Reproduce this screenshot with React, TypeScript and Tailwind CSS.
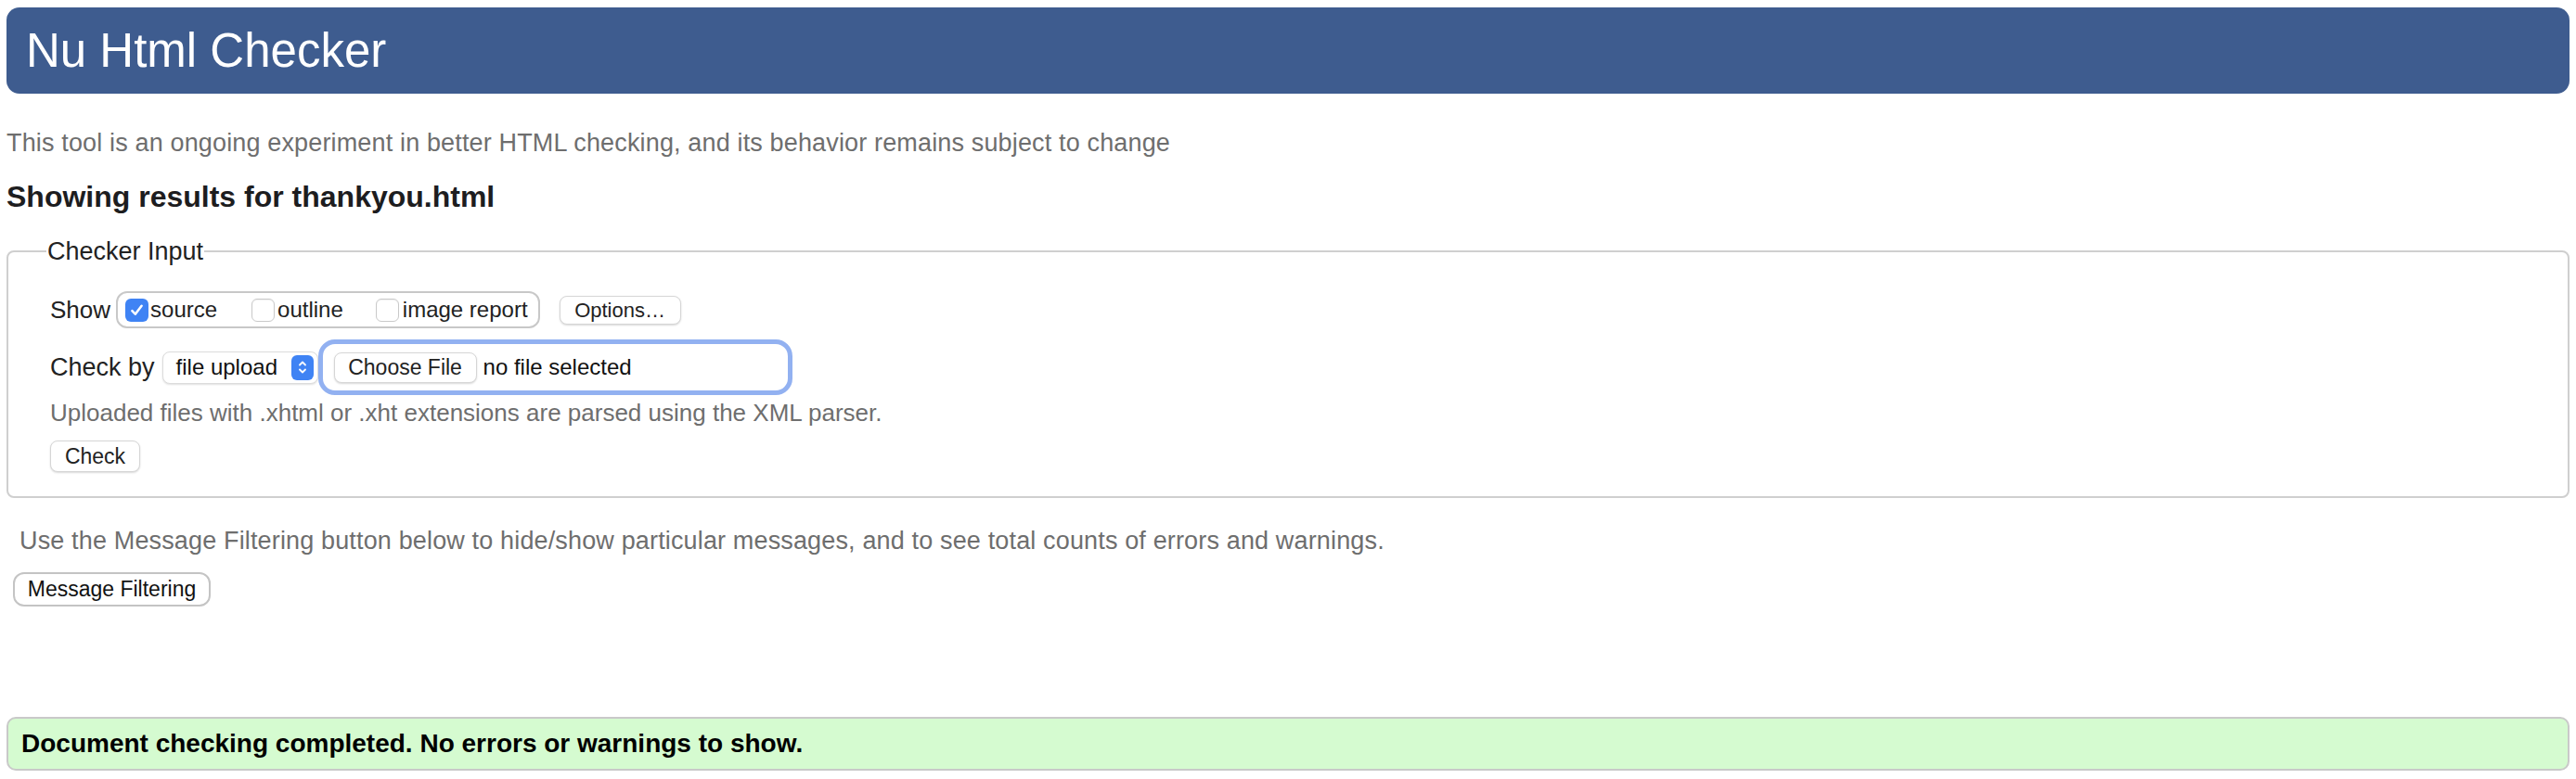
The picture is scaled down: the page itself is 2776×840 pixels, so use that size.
import React from "react";

function Checkbox({ checked }: { checked?: boolean }) {
  if (checked) {
    return (
      <span className="flex h-[25px] w-[25px] items-center justify-center rounded-[6px] bg-[#3f83f4]">
        <svg width="17" height="17" viewBox="0 0 16 16" fill="none">
          <path d="M3.2 8.6 L6.4 12 L12.8 3.6" stroke="white" strokeWidth="2.4" strokeLinecap="round" strokeLinejoin="round" />
        </svg>
      </span>
    );
  }
  return <span className="block h-[25px] w-[25px] rounded-[6px] border border-[#c9c9c9] bg-white shadow-[inset_0_1px_1px_rgba(0,0,0,0.06)]" />;
}

function Stepper() {
  return (
    <span className="flex h-[27px] w-[24px] items-center justify-center rounded-[6px] bg-[#3f83f4]">
      <svg width="14" height="20" viewBox="0 0 14 20" fill="none">
        <path d="M4 7.5 L7 4.5 L10 7.5" stroke="white" strokeWidth="1.8" strokeLinecap="round" strokeLinejoin="round" />
        <path d="M4 12.5 L7 15.5 L10 12.5" stroke="white" strokeWidth="1.8" strokeLinecap="round" strokeLinejoin="round" />
      </svg>
    </span>
  );
}

export default function App() {
  return (
    <div className="min-h-[840px] bg-white px-[7px] pt-[8px] font-['Liberation_Sans',Arial,sans-serif]">
      <h1 className="flex h-[93px] items-center rounded-[14px] bg-[#3e5c8f] pl-[21px] text-[51px] font-normal leading-none text-white">
        Nu Html Checker
      </h1>
      <p className="mt-[33px] text-[27px] leading-[40px] tracking-[0.15px] text-[#6e6e6e]">
        This tool is an ongoing experiment in better HTML checking, and its behavior remains subject to change
      </p>
      <h2 className="mt-[18px] text-[32px] font-bold leading-[40px] text-[#1d1d1f]">
        Showing results for thankyou.html
      </h2>
      <fieldset className="mt-[21px] rounded-[8px] border-2 border-[#cfcfcf] pb-[26px] pl-[41px]">
        <legend className="px-[1px] text-[27px] leading-[36px] text-[#222]">Checker Input</legend>
        <div className="pl-[4px]">
          <div className="mt-[25px] flex h-[40px] items-center">
            <span className="text-[26px] text-[#222]">Show</span>
            <div className="ml-[6px] flex h-[40px] items-center rounded-[12px] border-2 border-[#c8c8c8] pl-[8px] pr-[11px] text-[24px] text-[#222]">
              <label className="flex items-center gap-[2px]">
                <Checkbox checked />
                <span>source</span>
              </label>
              <label className="ml-[37px] flex items-center gap-[3px]">
                <Checkbox />
                <span>outline</span>
              </label>
              <label className="ml-[35px] flex items-center gap-[4px]">
                <Checkbox />
                <span>image report</span>
              </label>
            </div>
            <button className="ml-[21px] flex h-[31px] w-[131px] items-center justify-center rounded-[8px] border border-[#d6d6d6] bg-white text-[22px] text-[#222] shadow-[0_1px_2px_rgba(0,0,0,0.15)]">
              Options…
            </button>
          </div>
          <div className="mt-[12px] flex h-[60px] items-center">
            <span className="text-[27px] text-[#222]">Check by</span>
            <div className="ml-[8px] flex h-[35px] w-[168px] items-center justify-between rounded-[8px] border border-[#dcdcdc] bg-white pl-[14px] pr-[4px] text-[24px] text-[#111] shadow-[0_1px_2px_rgba(0,0,0,0.12)]">
              <span>file upload</span>
              <Stepper />
            </div>
            <div className="flex h-[60px] w-[511px] items-center rounded-[18px] border-[5px] border-[#92b1f1] pl-[12px]">
              <button className="flex h-[33px] w-[154px] items-center justify-center rounded-[8px] border border-[#d6d6d6] bg-white text-[23px] text-[#222] shadow-[0_1px_2px_rgba(0,0,0,0.15)]">
                Choose File
              </button>
              <span className="ml-[7px] text-[24px] text-[#111]">no file selected</span>
            </div>
          </div>
          <p className="mt-[1px] text-[26px] leading-[36px] text-[#6e6e6e]">
            Uploaded files with .xhtml or .xht extensions are parsed using the XML parser.
          </p>
          <button className="mt-[12px] flex h-[34px] w-[97px] items-center justify-center rounded-[8px] border border-[#d6d6d6] bg-white text-[23px] text-[#222] shadow-[0_1px_2px_rgba(0,0,0,0.15)]">
            Check
          </button>
        </div>
      </fieldset>
      <p className="mt-[28px] pl-[14px] text-[27px] leading-[36px] tracking-[0.15px] text-[#6e6e6e]">
        Use the Message Filtering button below to hide/show particular messages, and to see total counts of errors and warnings.
      </p>
      <button className="ml-[7px] mt-[16px] flex h-[37px] w-[213px] items-center justify-center rounded-[12px] border-2 border-[#c4c4c4] bg-white text-[23px] text-[#111]">
        Message Filtering
      </button>
      <div className="mt-[119px] flex h-[58px] items-center rounded-[10px] border-2 border-[#c9c9c9] bg-[#d5fbd0] pl-[14px] text-[28px] font-bold text-black">
        Document checking completed. No errors or warnings to show.
      </div>
    </div>
  );
}
